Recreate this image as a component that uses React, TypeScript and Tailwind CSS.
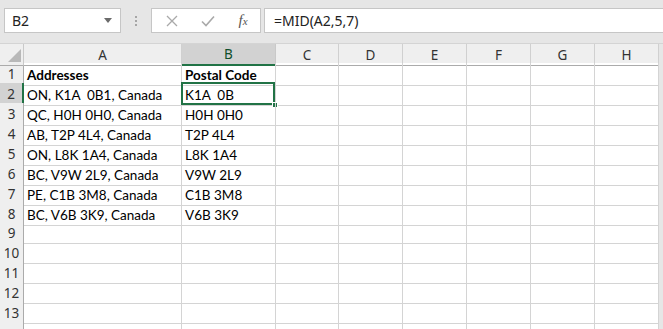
import React from 'react';

const cols = ['A', 'B', 'C', 'D', 'E', 'F', 'G', 'H'];

const data: [string, string][] = [
    ['Addresses', 'Postal Code'],
    ['ON, K1A  0B1, Canada', 'K1A  0B'],
    ['QC, H0H 0H0, Canada', 'H0H 0H0'],
    ['AB, T2P 4L4, Canada', 'T2P 4L4'],
    ['ON, L8K 1A4, Canada', 'L8K 1A4'],
    ['BC, V9W 2L9, Canada', 'V9W 2L9'],
    ['PE, C1B 3M8, Canada', 'C1B 3M8'],
    ['BC, V6B 3K9, Canada', 'V6B 3K9'],
];

const gridCols = 'grid grid-cols-[24px_158px_94px_63px_64px_64px_64px_64px_64px_1fr]';
const uiFont = "font-['Noto_Sans',sans-serif]";
const cellFont = "font-['Lato',sans-serif]";

const Toolbar = () => (
    <div className="h-[43px] bg-[#e6e6e6] flex items-start pt-2 pl-1 pr-0">
        {/* name box */}
        <div className="w-[117px] h-[25px] bg-white border border-[#c6c6c6] flex items-center justify-between pl-[7px] pr-[8px]">
            <span className={`${uiFont} text-[14px] text-[#222]`}>B2</span>
            <svg width="8" height="5" viewBox="0 0 8 5">
                <path d="M0 0h8L4 5z" fill="#6b6b6b"/>
            </svg>
        </div>
        <div className="w-[30px] h-[25px] flex flex-col items-center justify-center gap-[2px]">
            <div className="w-[2px] h-[2px] bg-[#a6a6a6]"/>
            <div className="w-[2px] h-[2px] bg-[#a6a6a6]"/>
            <div className="w-[2px] h-[2px] bg-[#a6a6a6]"/>
        </div>
        {/* cancel / enter / fx */}
        <div className="w-[110px] h-[25px] bg-white border border-[#c6c6c6] flex items-center">
            <div className="w-[37px] flex justify-center pl-[2px]">
                <svg width="12" height="12" viewBox="0 0 12 12">
                    <path d="M1 1l10 10M11 1L1 11" stroke="#a9a9a9" strokeWidth="1.3"/>
                </svg>
            </div>
            <div className="w-[37px] flex justify-center">
                <svg width="14" height="12" viewBox="0 0 14 12">
                    <path d="M1 6.5l4 4L13 1.5" stroke="#a9a9a9" strokeWidth="1.6" fill="none"/>
                </svg>
            </div>
            <div className="w-[34px] flex justify-center">
                <span className="font-['Liberation_Serif',serif] italic text-[15px] text-[#555] leading-none">
                    f<span className="text-[11px]">x</span>
                </span>
            </div>
        </div>
        <div className="ml-[3px] flex-1 h-[25px] bg-white border border-[#c6c6c6] border-r-0 flex items-center pl-[9px]">
            <span className={`${uiFont} text-[14px] text-[#222]`}>=MID(A2,5,7)</span>
        </div>
    </div>
);

const ColumnHeader = () => (
    <div className={`${gridCols} h-[20px] bg-[#efefef] border-t border-[#d4d4d4]`}>
        <div className="relative border-r border-[#c9c9c9] border-b border-b-[#ababab]">
            <svg className="absolute right-[2px] bottom-[3px]" width="13" height="13" viewBox="0 0 13 13">
                <path d="M13 0v13H0z" fill="#b8b8b8"/>
            </svg>
        </div>
        {cols.map((c) => {
            const sel = c === 'B';
            return (
                <div
                    key={c}
                    className={`flex items-center justify-center border-r ${uiFont} text-[13.5px] ${
                        sel
                            ? 'bg-[#d2d2d2] border-r-[#c9c9c9] border-b-2 border-b-[#217346] text-[#0f4f2b]'
                            : 'border-r-[#d0d0d0] border-b border-b-[#ababab] text-[#333]'
                    }`}
                >
                    {c}
                </div>
            );
        })}
        <div className="bg-[#e6e6e6] border-b border-b-[#ababab]"/>
    </div>
);

const App = () => {
    const rows = Array.from({length: 14}, (_, i) => i + 1);

    return (
        <div className="w-[663px] h-[329px] overflow-hidden bg-white">
            <Toolbar/>
            <ColumnHeader/>
            {rows.map((r) => {
                const vals = data[r - 1] || ['', ''];
                const bold = r === 1;
                const selRow = r === 2;
                return (
                    <div key={r} className={`${gridCols} h-[20px]`}>
                        <div
                            className={`flex items-center justify-center ${uiFont} text-[13.5px] text-[#333] border-b border-b-[#d4d4d4] ${
                                selRow
                                    ? 'bg-[#d2d2d2] border-r-2 border-r-[#217346]'
                                    : 'bg-[#efefef] border-r border-r-[#ababab]'
                            }`}
                        >
                            {/* last row is only a sliver, its number is out of view */}
                            {r < 14 ? r : ''}
                        </div>
                        <div className="flex items-center pl-[3px] pt-[2px] border-r border-b border-[#d4d4d4] overflow-hidden">
                            <span className={`${cellFont} text-[13.5px] text-black whitespace-pre ${bold ? 'font-bold' : ''}`}>
                                {vals[0]}
                            </span>
                        </div>
                        <div className="relative flex items-center pl-[3px] pt-[2px] border-r border-b border-[#d4d4d4] overflow-visible">
                            <span className={`${cellFont} text-[13.5px] text-black whitespace-pre ${bold ? 'font-bold' : ''}`}>
                                {vals[1]}
                            </span>
                            {selRow && (
                                <>
                                    <div className="absolute -left-[1px] -top-[1px] right-0 bottom-0 border-2 border-[#217346]"/>
                                    <div className="absolute -right-[3px] -bottom-[3px] w-[6px] h-[6px] bg-[#217346] border border-white"/>
                                </>
                            )}
                        </div>
                        {cols.slice(2).map((c) => (
                            <div key={c} className="border-r border-b border-[#d4d4d4]"/>
                        ))}
                        <div className="bg-[#e6e6e6]"/>
                    </div>
                );
            })}
        </div>
    );
};

export default App;
